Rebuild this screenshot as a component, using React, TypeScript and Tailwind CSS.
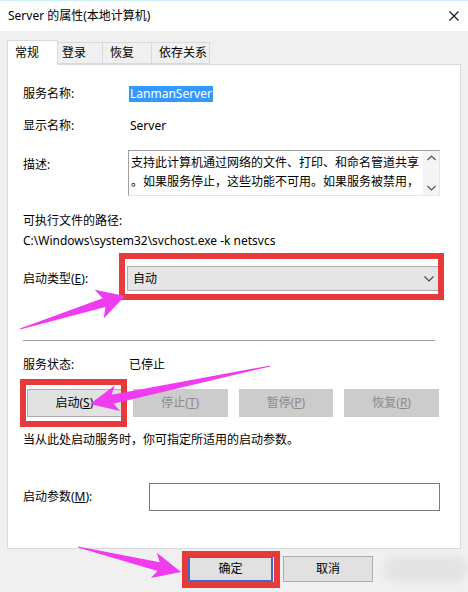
import React from "react";

function arrowPoints(
  tx: number, ty: number, hx: number, hy: number,
  w0: number, w1: number, headLen: number, headW: number
) {
  const dx = hx - tx, dy = hy - ty;
  const L = Math.sqrt(dx * dx + dy * dy);
  const ux = dx / L, uy = dy / L;
  const nx = -uy, ny = ux;
  const bx = hx - ux * headLen, by = hy - uy * headLen;
  const bbx = hx - ux * (headLen - 5), bby = hy - uy * (headLen - 5);
  const pts: [number, number][] = [
    [tx + (nx * w0) / 2, ty + (ny * w0) / 2],
    [bbx + (nx * w1) / 2, bby + (ny * w1) / 2],
    [bx + (nx * headW) / 2, by + (ny * headW) / 2],
    [hx, hy],
    [bx - (nx * headW) / 2, by - (ny * headW) / 2],
    [bbx - (nx * w1) / 2, bby - (ny * w1) / 2],
    [tx - (nx * w0) / 2, ty - (ny * w0) / 2],
  ];
  return pts.map((p) => p[0].toFixed(1) + "," + p[1].toFixed(1)).join(" ");
}

const font = "font-['Noto_Sans','Noto_Sans_CJK_SC',sans-serif]";

function Btn({ children, disabled }: { children: React.ReactNode; disabled?: boolean }) {
  return (
    <div
      className={
        "h-[28px] flex items-center justify-center text-[12px] border " +
        (disabled
          ? "bg-[#cccccc] border-[#cccccc] text-[#8a8a8a]"
          : "bg-[#e1e1e1] border-[#adadad] text-black")
      }
    >
      {children}
    </div>
  );
}

export default function App() {
  return (
    <div className={"relative w-[468px] h-[592px] overflow-hidden bg-[#f0f0f0] text-black " + font}>
      {/* title bar */}
      <div className="h-[31px] bg-white border-t border-[#cdeff7] flex items-center justify-between pl-[8px] pr-[9px]">
        <span className="text-[12px] leading-none">Server 的属性(本地计算机)</span>
        <svg width="10" height="10" viewBox="0 0 10 10">
          <path d="M0.5 0.5 L9.5 9.5 M9.5 0.5 L0.5 9.5" stroke="#111" strokeWidth="1.1" />
        </svg>
      </div>

      {/* tabs */}
      <div className="h-[33px] flex items-end pl-[7px]">
        <div className="relative z-10 mb-[-1px] h-[25px] w-[51px] bg-white border border-[#d9d9d9] border-b-white flex items-center pl-[7px] text-[12px]">
          常规
        </div>
        <div className="h-[22px] w-[45px] border border-l-0 border-[#d9d9d9] flex items-center pl-[4px] text-[12px] bg-[#f0f0f0]">
          登录
        </div>
        <div className="h-[22px] w-[49px] border border-l-0 border-[#d9d9d9] flex items-center pl-[7px] text-[12px] bg-[#f0f0f0]">
          恢复
        </div>
        <div className="h-[22px] w-[58px] border border-l-0 border-[#d9d9d9] flex items-center pl-[7px] text-[12px] bg-[#f0f0f0]">
          依存关系
        </div>
      </div>

      {/* panel */}
      <div className="ml-[7px] w-[454px] h-[485px] bg-white border border-[#d9d9d9] flex flex-col pl-[15px] text-[12px]">
        <div className="mt-[19px] h-[20px] flex items-center">
          <span className="w-[106px]">服务名称:</span>
          <span className="bg-[#3399ff] text-white px-[1px] leading-[16px]">LanmanServer</span>
        </div>
        <div className="mt-[12px] h-[20px] flex items-center">
          <span className="w-[106px]">显示名称:</span>
          <span className="pl-[1px]">Server</span>
        </div>
        <div className="mt-[14px] h-[46px] flex">
          <span className="w-[105px] pt-[6px]">描述:</span>
          <div className="w-[312px] h-[46px] border border-[#a0a0a0] border-b-[#e6e6e6] border-r-[#e6e6e6] flex">
            <div className="flex-1 pl-[2px] pt-[2px] leading-[19px] whitespace-nowrap overflow-hidden">
              <div>支持此计算机通过网络的文件、打印、和命名管道共享</div>
              <div>。如果服务停止，这些功能不可用。如果服务被禁用，</div>
            </div>
            <div className="w-[16px] flex flex-col items-center justify-between py-[4px] bg-[#f4f4f4]">
              <svg width="9" height="6" viewBox="0 0 9 6">
                <path d="M0.5 5 L4.5 1 L8.5 5" stroke="#555" strokeWidth="1.2" fill="none" />
              </svg>
              <svg width="9" height="6" viewBox="0 0 9 6">
                <path d="M0.5 1 L4.5 5 L8.5 1" stroke="#555" strokeWidth="1.2" fill="none" />
              </svg>
            </div>
          </div>
        </div>
        <div className="mt-[15px] h-[20px] flex items-center">可执行文件的路径:</div>
        <div className="h-[20px] flex items-center">C:\Windows\system32\svchost.exe -k netsvcs</div>
        <div className="mt-[15px] h-[25px] flex items-center">
          <span className="w-[104px]">
            启动类型(<u>E</u>):
          </span>
          <div className="w-[312px] h-[25px] bg-[#e5e5e5] border border-[#adadad] flex items-center justify-between pl-[5px] pr-[4px]">
            <span>自动</span>
            <svg width="10" height="6" viewBox="0 0 10 6">
              <path d="M0.5 0.5 L5 5 L9.5 0.5" stroke="#444" strokeWidth="1.1" fill="none" />
            </svg>
          </div>
        </div>
        <div className="mt-[49px] w-[412px] h-[1px] bg-[#a0a0a0]" />
        <div className="mt-[14px] h-[20px] flex items-center">
          <span className="w-[106px]">服务状态:</span>
          <span>已停止</span>
        </div>
        <div className="mt-[14px] pl-[4px] w-[416px] grid grid-cols-4 gap-[11px]">
          <Btn>
            启动(<u>S</u>)
          </Btn>
          <Btn disabled>
            停止(<u>T</u>)
          </Btn>
          <Btn disabled>
            暂停(<u>P</u>)
          </Btn>
          <Btn disabled>
            恢复(<u>R</u>)
          </Btn>
        </div>
        <div className="mt-[13px] h-[20px] flex items-center">当从此处启动服务时，你可指定所适用的启动参数。</div>
        <div className="mt-[33px] h-[28px] flex items-center">
          <span className="w-[126px]">
            启动参数(<u>M</u>):
          </span>
          <div className="w-[291px] h-[28px] border border-[#7a7a7a] bg-white" />
        </div>
      </div>

      {/* bottom buttons */}
      <div className="mt-[7px] flex pl-[188px] gap-[10px] text-[12px]">
        <div className="w-[85px] h-[26px] bg-[#e1e1e1] border-2 border-[#3c6cc8] flex items-center justify-center">
          确定
        </div>
        <div className="w-[90px] h-[26px] bg-[#e1e1e1] border border-[#adadad] flex items-center justify-center">
          取消
        </div>
        <div className="w-[84px] h-[26px] bg-[#e4e4e4] rounded-[12px] blur-[3px]" />
      </div>

      {/* red highlight boxes */}
      <div className="absolute left-[119px] top-[253px] w-[325px] h-[47px] border-[6px] border-[#e8393b]" />
      <div className="absolute left-[20px] top-[379px] w-[107px] h-[48px] border-[6px] border-[#e8393b]" />
      <div className="absolute left-[182px] top-[551px] w-[98px] h-[37px] border-[6px] border-[#e8393b]" />

      {/* magenta arrows */}
      <svg className="absolute left-0 top-0 pointer-events-none" width="468" height="592" viewBox="0 0 468 592">
        <polygon points={arrowPoints(20, 329, 125, 296, 1, 9, 27, 30)} fill="#f03cf0" />
        <polygon points={arrowPoints(270, 366, 90, 404, 1, 9, 28, 26)} fill="#f03cf0" />
        <polygon points={arrowPoints(78, 547, 181, 572, 1, 9, 28, 26)} fill="#f03cf0" />
      </svg>
    </div>
  );
}
